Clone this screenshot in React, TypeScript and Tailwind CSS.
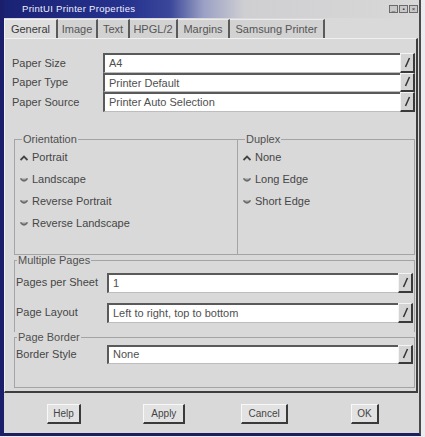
import type { ReactNode } from 'react';

const SlashButton = ({ className = '' }: { className?: string }) => (
  <div
    className={`w-[15px] h-full flex items-center justify-center bg-[#d4d4d4] border-t border-l border-t-[#f4f4f4] border-l-[#f4f4f4] border-r-2 border-b-2 border-r-[#3a3a3a] border-b-[#3a3a3a] ${className}`}
  >
    <svg width="7" height="11" viewBox="0 0 7 11">
      <line x1="1.5" y1="10" x2="5.5" y2="1" stroke="#333" strokeWidth="1.5" />
    </svg>
  </div>
);

const Combo = ({ value, width }: { value: string; width: string }) => (
  <div className="flex h-full">
    <div
      className={`${width} h-full bg-white border-t-2 border-l-2 border-t-[#5a5a5a] border-l-[#5a5a5a] border-b border-b-[#bdbdbd] flex items-center pl-[4px] text-[#505050]`}
    >
      {value}
    </div>
    <SlashButton />
  </div>
);

const Radio = ({ checked, label }: { checked?: boolean; label: string }) => (
  <div className="h-[22px] flex items-center gap-[4px]">
    <svg width="8" height="6" viewBox="0 0 8 6">
      {checked ? (
        <polyline points="0.5,5 4,1.5 7.5,5" fill="none" stroke="#444" strokeWidth="1.8" />
      ) : (
        <path d="M0.5 1.5 Q4 6.5 7.5 1.5" fill="#999" stroke="#666" strokeWidth="1.4" />
      )}
    </svg>
    <span className="text-[#464646]">{label}</span>
  </div>
);

const Group = ({
  title,
  className,
  children,
}: {
  title: string;
  className: string;
  children: ReactNode;
}) => (
  <fieldset className={`border-[#a4a4a4] ${className}`}>
    <legend className="ml-[2px] px-[1px] leading-[11px] text-[#505050]">{title}</legend>
    {children}
  </fieldset>
);

const tabs = [
  { name: 'General', w: 'w-[54px]' },
  { name: 'Image', w: 'w-[40px]' },
  { name: 'Text', w: 'w-[32px]' },
  { name: 'HPGL/2', w: 'w-[48px]' },
  { name: 'Margins', w: 'w-[52px]' },
  { name: 'Samsung Printer', w: 'w-[95px]' },
];

const paperRows = [
  { label: 'Paper Size', value: 'A4' },
  { label: 'Paper Type', value: 'Printer Default' },
  { label: 'Paper Source', value: 'Printer Auto Selection' },
];

export default function App() {
  return (
    <div className="w-[425px] h-[437px] bg-[#ececf0] font-['Liberation_Sans',Arial,sans-serif] text-[11px] text-[#464646] overflow-hidden">
      <div className="w-[421px] h-[436px] flex flex-col bg-[#d9d9d9] border-l-4 border-l-[#1b1f6b] border-r-2 border-r-[#4a4a4a] border-b-[3px] border-b-[#1b1f5e]">
        {/* Title bar */}
        <div className="h-[18px] flex items-center justify-between bg-[linear-gradient(90deg,#1a2274_0%,#26338f_30%,#3b4799_40%,#9aa0c4_48%,#cfcfd2_58%,#d8d8d8_100%)]">
          <span className="pl-[18px] text-[9.5px] text-[#f0f0ff] tracking-[0.3px]">PrintUI Printer Properties</span>
          <div className="flex gap-[1px] pr-[1px]">
            {['_', '▪', '×'].map((s) => (
              <div
                key={s}
                className="w-[9px] h-[8px] flex items-center justify-center bg-[#c8c8c8] border border-[#6a6a6a] text-[6px] leading-none text-[#333]"
              >
                {s}
              </div>
            ))}
          </div>
        </div>

        {/* Tabs */}
        <div className="h-[20px] flex items-end">
          {tabs.map((t, i) => (
            <div
              key={t.name}
              className={`${t.w} h-[19px] flex items-center justify-center border-r-2 border-r-[#5a5a5a] ${
                i === 0
                  ? 'bg-[#dedede] border-t border-l border-t-[#f2f2f2] border-l-[#f2f2f2] text-[#3a3a3a]'
                  : 'bg-[#d2d2d2] border-t border-t-[#ebebeb] text-[#555]'
              }`}
            >
              {t.name}
            </div>
          ))}
        </div>

        {/* Tab panel */}
        <div className="h-[355px] mr-[1px] flex flex-col border-t border-l border-t-[#f0f0f0] border-l-[#f0f0f0] border-r-2 border-b-2 border-r-[#3e3e3e] border-b-[#3e3e3e] pt-[14px]">
          <div className="flex flex-col">
            {paperRows.map((r) => (
              <div key={r.label} className="h-[19.5px] flex items-center">
                <div className="w-[98px] pl-[7px]">{r.label}</div>
                <Combo value={r.value} width="w-[297px]" />
              </div>
            ))}
          </div>

          <div className="flex ml-[9px] mt-[22px] h-[121px]">
            <Group title="Orientation" className="w-[223px] border border-r-0 pl-[5px] pt-[2px]">
              <Radio checked label="Portrait" />
              <Radio label="Landscape" />
              <Radio label="Reverse Portrait" />
              <Radio label="Reverse Landscape" />
            </Group>
            <Group title="Duplex" className="w-[178px] border pl-[5px] pt-[2px]">
              <Radio checked label="None" />
              <Radio label="Long Edge" />
              <Radio label="Short Edge" />
            </Group>
          </div>

          <Group title="Multiple Pages" className="ml-[9px] w-[401px] border border-b-0 h-[77px]">
            <div className="flex flex-col gap-[10px] pt-[7px]">
              <div className="h-[20px] flex items-center">
                <div className="w-[92px] pl-[1px]">Pages per Sheet</div>
                <Combo value="1" width="w-[291px]" />
              </div>
              <div className="h-[20px] flex items-center">
                <div className="w-[92px] pl-[1px]">Page Layout</div>
                <Combo value="Left to right, top to bottom" width="w-[291px]" />
              </div>
            </div>
          </Group>

          <Group title="Page Border" className="ml-[9px] w-[401px] border h-[56px]">
            <div className="pt-[2px]">
              <div className="h-[19px] flex items-center">
                <div className="w-[92px] pl-[1px]">Border Style</div>
                <Combo value="None" width="w-[291px]" />
              </div>
            </div>
          </Group>
        </div>

        {/* Buttons */}
        <div className="flex-1 grid grid-cols-4 items-center pl-[10px] pr-[4px] pt-[2px]">
          {[
            { t: 'Help', w: 'w-[34px]' },
            { t: 'Apply', w: 'w-[42px]' },
            { t: 'Cancel', w: 'w-[47px]' },
            { t: 'OK', w: 'w-[28px]' },
          ].map((b) => (
            <div key={b.t} className="flex justify-center">
              <div
                className={`${b.w} h-[20px] flex items-center justify-center bg-[#e2e2e2] border-t border-l border-t-[#f8f8f8] border-l-[#f8f8f8] border-r-2 border-b-2 border-r-[#3a3a3a] border-b-[#3a3a3a] text-[10px] text-[#444]`}
              >
                {b.t}
              </div>
            </div>
          ))}
        </div>
      </div>
    </div>
  );
}
